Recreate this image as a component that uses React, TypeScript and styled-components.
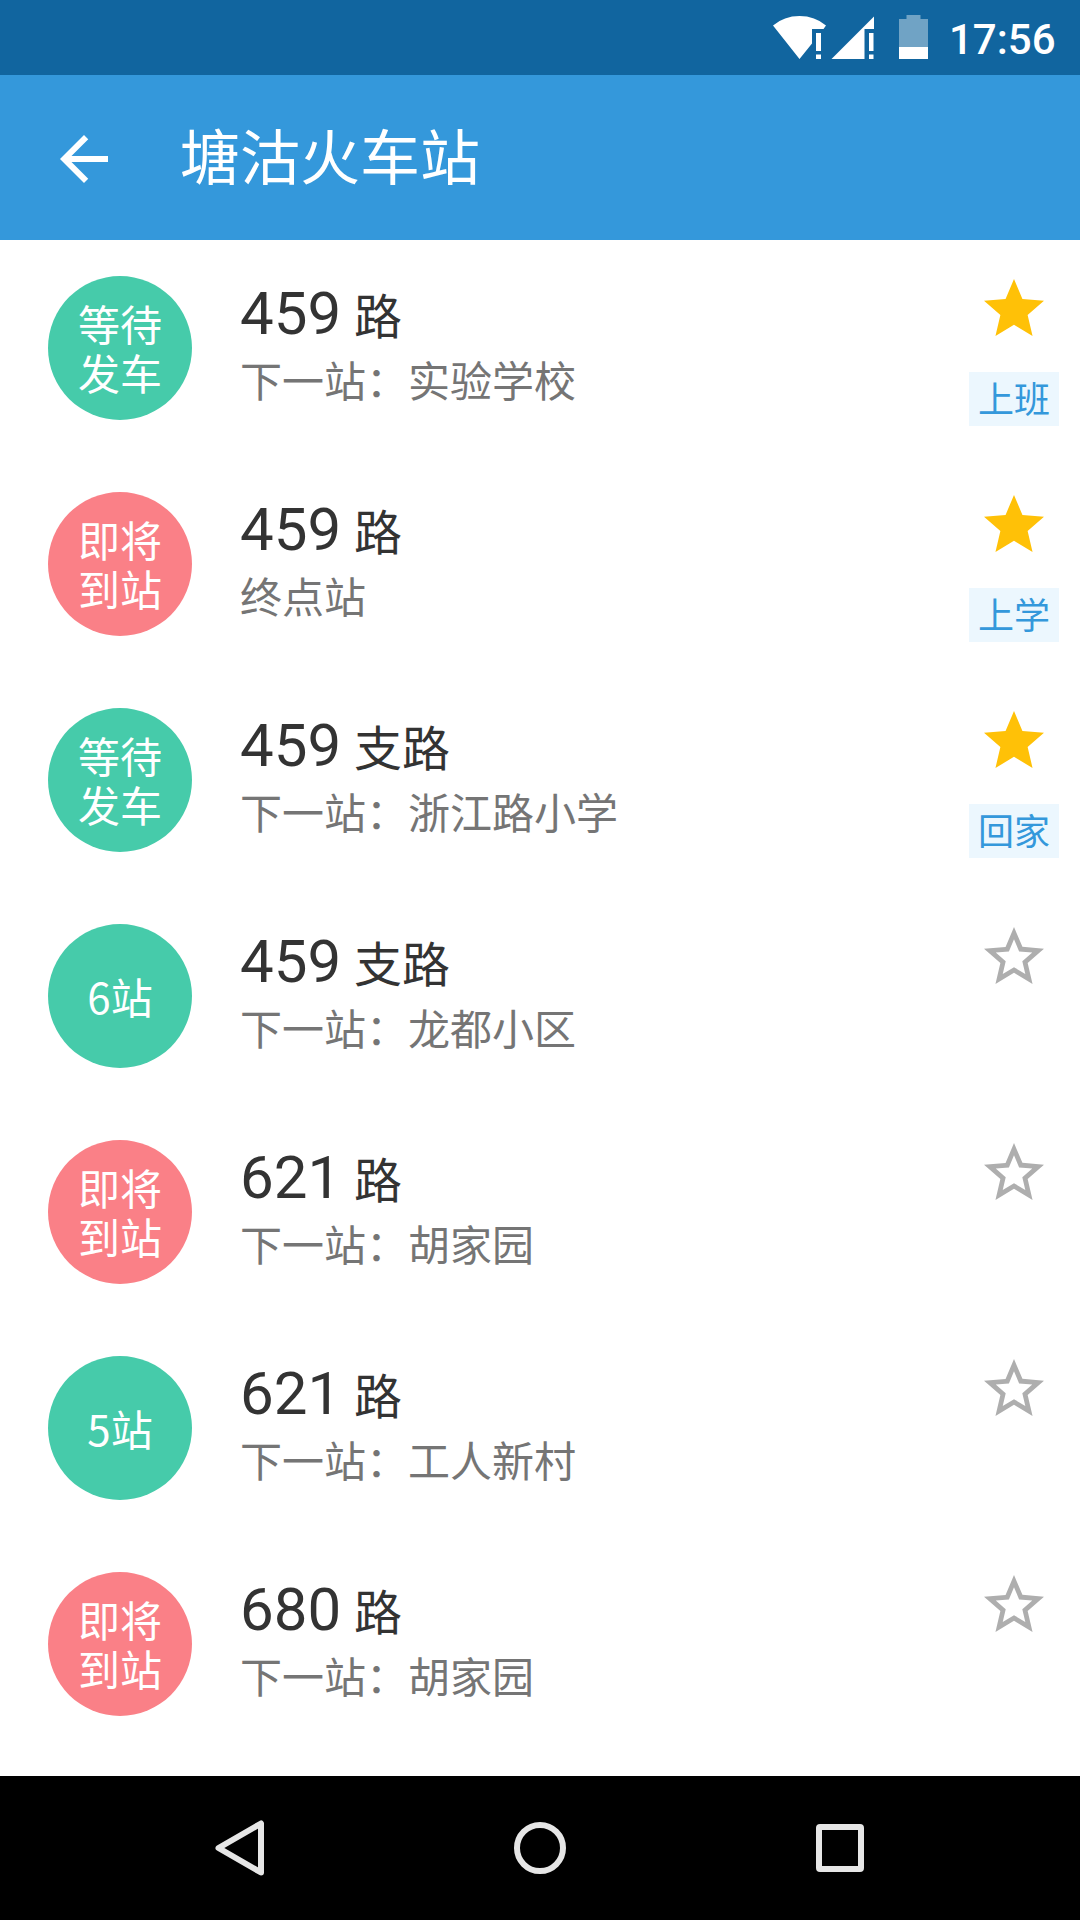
import React from "react";
import styled, { createGlobalStyle } from "styled-components";

const GlobalStyle = createGlobalStyle`
  * { box-sizing: border-box; }
  body {
    margin: 0;
    background: #ffffff;
    font-family: Roboto, "Noto Sans CJK SC", sans-serif;
  }
`;

const Screen = styled.div`
  width: 1080px;
  height: 1920px;
  display: flex;
  flex-direction: column;
  overflow: hidden;
  background: #ffffff;
`;

const StatusBar = styled.div`
  height: 75px;
  padding-right: 24px;
  display: flex;
  align-items: center;
  justify-content: flex-end;
  background: #11659f;
`;

const StatusIcons = styled.svg`
  display: block;
  width: 160px;
  height: 75px;
`;

const Clock = styled.span`
  width: 107px;
  margin-left: 16px;
  padding-top: 3px;
  font-size: 42px;
  line-height: 49px;
  font-weight: 500;
  color: #ffffff;
  white-space: nowrap;
`;

const AppBar = styled.header`
  height: 165px;
  padding: 3px 48px 0;
  display: flex;
  align-items: center;
  gap: 60px;
  background: #3498db;
`;

const BackArrow = styled.svg`
  width: 72px;
  height: 72px;
  fill: #ffffff;
`;

const Title = styled.h1`
  margin: 0;
  padding-top: 1px;
  font-size: 60px;
  line-height: 72px;
  font-weight: 400;
  color: #ffffff;
`;

const List = styled.main`
  flex: 1;
  display: flex;
  flex-direction: column;
`;

const Row = styled.div`
  height: 216px;
  padding: 33px 21px 0 48px;
  display: flex;
  align-items: flex-start;
`;

const Badge = styled.div<{ $soon: boolean }>`
  width: 144px;
  height: 144px;
  margin: 3px 48px 0 0;
  padding-bottom: 2px;
  display: flex;
  align-items: center;
  justify-content: center;
  border-radius: 50%;
  background: ${(p) => (p.$soon ? "#fa8087" : "#46cbaa")};
  color: #ffffff;
  font-family: "Noto Sans CJK SC", sans-serif;
  font-size: 42px;
  line-height: 49px;
  text-align: center;
  white-space: pre-line;
`;

const Info = styled.div`
  flex: 1;
  padding-top: 6px;
  display: flex;
  flex-direction: column;
`;

const Route = styled.div`
  height: 73px;
  font-size: 60px;
  line-height: 70px;
  color: #333333;
  white-space: nowrap;
`;

const RouteKind = styled.span`
  margin-left: 1px;
  font-size: 48px;
  white-space: pre;
`;

const Next = styled.div`
  height: 62px;
  font-size: 42px;
  line-height: 62px;
  color: #757575;
`;

const Side = styled.div`
  width: 90px;
  display: flex;
  flex-direction: column;
  align-items: center;
`;

const Star = styled.svg<{ $on: boolean }>`
  width: 72px;
  height: 72px;
  fill: ${(p) => (p.$on ? "#ffc107" : "#aeaeae")};
`;

const Tag = styled.div`
  width: 90px;
  height: 54px;
  margin-top: 27px;
  padding-top: 2px;
  background: #ecf7fe;
  color: #3498db;
  font-size: 36px;
  line-height: 54px;
  text-align: center;
`;

const NavBar = styled.nav`
  height: 144px;
  display: flex;
  justify-content: center;
  background: #000000;
`;

const NavButton = styled.div`
  width: 300px;
  display: flex;
  align-items: center;
  justify-content: center;
`;

const NavIcon = styled.svg`
  width: 72px;
  height: 72px;
  fill: none;
  stroke: #e6e6e6;
  stroke-width: 6;
  stroke-linejoin: round;
`;

const STAR =
  "M12 17.27L18.18 21l-1.64-7.03L22 9.24l-7.19-.61L12 2 9.19 8.63 2 9.24l5.46 4.73L5.82 21z";
const STAR_OUTLINE =
  "M22 9.24l-7.19-.62L12 2 9.19 8.63 2 9.24l5.46 4.73L5.82 21 12 17.27 18.18 21l-1.63-7.03L22 9.24zM12 15.4l-3.76 2.27 1-4.28-3.32-2.88 4.38-.38L12 6.1l1.71 4.04 4.38.38-3.32 2.88 1 4.28L12 15.4z";

interface Bus {
  status: string;
  soon: boolean;
  route: string;
  kind: string;
  next: string;
  starred: boolean;
  tag?: string;
}

const buses: Bus[] = [
  { status: "等待\n发车", soon: false, route: "459", kind: "路", next: "下一站：实验学校", starred: true, tag: "上班" },
  { status: "即将\n到站", soon: true, route: "459", kind: "路", next: "终点站", starred: true, tag: "上学" },
  { status: "等待\n发车", soon: false, route: "459", kind: "支路", next: "下一站：浙江路小学", starred: true, tag: "回家" },
  { status: "6站", soon: false, route: "459", kind: "支路", next: "下一站：龙都小区", starred: false },
  { status: "即将\n到站", soon: true, route: "621", kind: "路", next: "下一站：胡家园", starred: false },
  { status: "5站", soon: false, route: "621", kind: "路", next: "下一站：工人新村", starred: false },
  { status: "即将\n到站", soon: true, route: "680", kind: "路", next: "下一站：胡家园", starred: false },
];

export default function App() {
  return (
    <>
      <GlobalStyle />
      <Screen>
        <StatusBar>
          <StatusIcons viewBox="773 0 160 75">
            <g fill="#ffffff">
              <path d="M799.5 59L773 25.5Q784 16 799.5 16T826 25.5L823.5 29H812V43.5z" />
              <path d="M816 33h5v18h-5zM816 54.5h5v4.5h-5z" />
              <path d="M831.5 59L874 16.5V29H864.5V59z" />
              <path d="M869 33h4.5v18h-4.5zM869 54.5h4.5v4.5h-4.5z" />
              <path d="M899 47h29v12h-29z" />
            </g>
            <path d="M899 47V19h7.5v-4h14v4h7.5v28z" fill="#70a3c5" />
          </StatusIcons>
          <Clock>17:56</Clock>
        </StatusBar>
        <AppBar>
          <BackArrow viewBox="0 0 24 24">
            <path d="M20 11H7.83l5.59-5.59L12 4l-8 8 8 8 1.41-1.41L7.83 13H20v-2z" />
          </BackArrow>
          <Title>塘沽火车站</Title>
        </AppBar>
        <List>
          {buses.map((b, i) => (
            <Row key={i}>
              <Badge $soon={b.soon}>{b.status}</Badge>
              <Info>
                <Route>
                  {b.route}
                  <RouteKind>{" " + b.kind}</RouteKind>
                </Route>
                <Next>{b.next}</Next>
              </Info>
              <Side>
                <Star viewBox="0 0 24 24" $on={b.starred}>
                  <path d={b.starred ? STAR : STAR_OUTLINE} />
                </Star>
                {b.tag && <Tag>{b.tag}</Tag>}
              </Side>
            </Row>
          ))}
        </List>
        <NavBar>
          <NavButton>
            <NavIcon viewBox="204 1812 72 72">
              <path d="M261 1823.5V1872.5L218.5 1848z" />
            </NavIcon>
          </NavButton>
          <NavButton>
            <NavIcon viewBox="0 0 72 72">
              <circle cx="36" cy="36" r="23" />
            </NavIcon>
          </NavButton>
          <NavButton>
            <NavIcon viewBox="0 0 72 72">
              <rect x="15" y="15" width="42" height="42" rx="1" />
            </NavIcon>
          </NavButton>
        </NavBar>
      </Screen>
    </>
  );
}
